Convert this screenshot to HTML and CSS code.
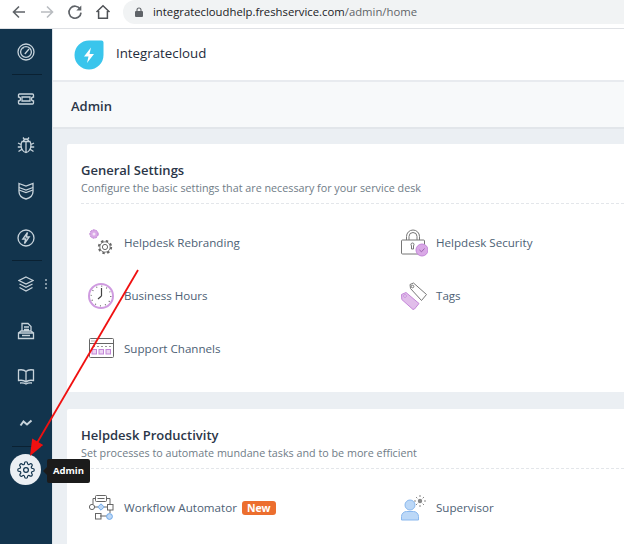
FILE: index.html
```html
<!DOCTYPE html>
<html lang="en">
<head>
<meta charset="utf-8">
<title>Admin</title>
<link rel="stylesheet" href="styles.css">
</head>
<body>
<div class="window">
  <header class="browser">
    <svg class="nav-icon" width="16" height="16" viewBox="0 0 16 16"><path d="M14 8H2.500M8 2.500 2.500 8 8 13.500" fill="none" stroke="#5f6368" stroke-width="1.600"/></svg>
    <svg class="nav-icon" width="16" height="16" viewBox="0 0 16 16"><path d="M2 8h11.500M8 2.500 13.500 8 8 13.500" fill="none" stroke="#b9bcc0" stroke-width="1.600"/></svg>
    <svg class="nav-icon" width="16" height="16" viewBox="0 0 16 16"><path d="M13.200 5.200A6 6 0 1 0 14 8.600" fill="none" stroke="#5f6368" stroke-width="1.700"/><path d="M14.300 1.500v5h-5z" fill="#5f6368"/></svg>
    <svg class="nav-icon" width="16" height="16" viewBox="0 0 16 16"><path d="M1.500 8 8 1.800 14.500 8M3.600 7v7.200h8.800V7" fill="none" stroke="#4f5256" stroke-width="1.500"/></svg>
    <div class="address">
      <svg width="8" height="10" viewBox="0 0 8 10"><path d="M2 4V3a2 2 0 0 1 4 0v1" fill="none" stroke="#5f6368" stroke-width="1.100"/><rect y="4" width="8" height="6" rx="1" fill="#5f6368"/></svg>
      <span class="url">integratecloudhelp.freshservice.com<span class="url-path">/admin/home</span></span>
    </div>
  </header>

  <div class="app">
    <nav class="rail">
      <div class="rail-item rail-sep"><svg width="18" height="18" viewBox="0 0 18 18" class="rail-icon"><circle cx="9" cy="9" r="8"/><circle cx="9" cy="9" r="5.400"/><path d="M7.800 11 12 6M6 4.500l.5.800"/></svg></div>
      <div class="rail-item"><svg width="18" height="12" viewBox="0 0 18 12" class="rail-icon"><path d="M2.500 1h13a1 1 0 0 1 1 1v2a2 2 0 0 0 0 4v2a1 1 0 0 1-1 1h-13a1 1 0 0 1-1-1V8a2 2 0 0 0 0-4V2a1 1 0 0 1 1-1z"/><path d="M5 4h8v4H5z"/></svg></div>
      <div class="rail-item"><svg width="18" height="18" viewBox="0 0 18 18" class="rail-icon"><path d="M5 5.500h8c1.200 2 1.400 6-.4 8.500-1 1.500-2.400 2.500-3.600 2.500S6.400 15.500 5.400 14C3.600 11.500 3.800 7.500 5 5.500zM6.500 5.500c0-1.500 1-2.500 2.500-2.500s2.500 1 2.500 2.500M6 1.500l1.500 2M12 1.500l-1.500 2M9 6v10M1 7l3 1.500M17 7l-3 1.500M.8 11H3.700M17.200 11h-2.900M1.500 15.500l3-2M16.500 15.500l-3-2"/></svg></div>
      <div class="rail-item"><svg width="16" height="18" viewBox="0 0 16 18" class="rail-icon"><path d="M1 1.500 8 4l7-2.500v8c0 3.500-3 6.500-7 7.500-4-1-7-4-7-7.500z"/><path d="M1 5.500 8 8l7-2.500M1 8l7 2.500L15 8"/></svg></div>
      <div class="rail-item rail-sep"><svg width="18" height="18" viewBox="0 0 18 18" class="rail-icon"><circle cx="9" cy="9" r="8"/><path d="M10.500 3.500 5.800 10h2.900l-1.200 4.500L12.200 8H9.300z"/></svg></div>
      <div class="rail-item"><svg width="16" height="17" viewBox="0 0 16 17" class="rail-icon"><path d="M8 1 15 4.500 8 8 1 4.500zM1.500 8 8 11.300 14.500 8M1.500 11.500 8 15l6.500-3.500"/></svg><span class="rail-dots"></span></div>
      <div class="rail-item"><svg width="18" height="18" viewBox="0 0 18 18" class="rail-icon"><path d="M5 9V1.500h6l3 3V9M7 5h5M7 7.500h5M1.500 11h15v5.500h-15zM1.500 11 4 9h10l2.500 2M5 13.500h8"/></svg></div>
      <div class="rail-item"><svg width="18" height="17" viewBox="0 0 18 17" class="rail-icon"><path d="M9 3.500C7.500 2 4.500 1.500 1.500 2v10.500c3-.5 6 0 7.500 1.500 1.500-1.500 4.500-2 7.500-1.500V2C13.500 1.500 10.500 2 9 3.500zM9 3.500V14M3 15c2.500-.3 4.500 0 6 1 1.500-1 3.500-1.300 6-1"/></svg></div>
      <div class="rail-item rail-sep"><svg width="14" height="8" viewBox="0 0 14 8" class="rail-trend"><path d="M1.500 6.500 4.500 2.500 8 5.500 12.500 1.500"/></svg></div>
      <div class="rail-item">
        <span class="rail-active"><svg width="18" height="18" viewBox="0 0 24 24" fill="none" stroke="#12344d" stroke-width="1.600" stroke-linejoin="round"><circle cx="12" cy="12" r="3.200"/><path d="M19.400 15a1.650 1.650 0 0 0 .33 1.820l.06.06a2 2 0 1 1-2.830 2.830l-.06-.06a1.650 1.650 0 0 0-2.800 1.170V21a2 2 0 0 1-4 0v-.09a1.650 1.650 0 0 0-2.820-1.150l-.06.06a2 2 0 1 1-2.830-2.830l.06-.06A1.650 1.650 0 0 0 3.090 14H3a2 2 0 0 1 0-4h.09a1.650 1.650 0 0 0 1.150-2.820l-.06-.06a2 2 0 1 1 2.830-2.830l.06.06A1.650 1.650 0 0 0 10 3.090V3a2 2 0 0 1 4 0v.09a1.650 1.650 0 0 0 2.820 1.150l.06-.06a2 2 0 1 1 2.830 2.830l-.06.06A1.650 1.650 0 0 0 20.910 10H21a2 2 0 0 1 0 4h-.09a1.650 1.650 0 0 0-1.510 1z"/></svg></span>
      </div>
    </nav>

    <main class="main">
      <div class="brand">
        <svg width="30" height="30" viewBox="0 0 30 30"><path d="M15 .5h12.500a2 2 0 0 1 2 2V15A14.500 14.500 0 1 1 15 .5z" fill="#3ac5ec"/><path d="M17 7.500 10 16.500h4.500L13 23l7-9h-4.500z" fill="#fff"/></svg>
        <span class="brand-name">Integratecloud</span>
      </div>
      <div class="page-title">Admin</div>

      <section class="card">
        <div class="card-head">
          <h2>General Settings</h2>
          <p>Configure the basic settings that are necessary for your service desk</p>
        </div>
        <div class="items">
          <div class="item">
            <svg width="28" height="28" viewBox="0 0 28 28"><circle cx="6" cy="5" r="4.200" fill="#d9a8e6" stroke="#bd7fd3" stroke-dasharray="2 1"/><circle cx="6" cy="5" r="1.500" fill="#f3e3f7"/><circle cx="17" cy="18" r="2.600" fill="none" stroke="#666"/><circle cx="17" cy="18" r="6.200" fill="none" stroke="#666" stroke-width="1.900" stroke-dasharray="2.400 2.480"/><circle cx="17" cy="18" r="5.200" fill="none" stroke="#666" stroke-width=".8"/></svg>
            <span>Helpdesk Rebranding</span>
          </div>
          <div class="item">
            <svg width="28" height="28" viewBox="0 0 28 28"><path d="M6.500 11V7.500a6.500 6.500 0 0 1 13 0V11M9 11V7.500a4 4 0 0 1 8 0V11" fill="none" stroke="#777"/><rect x="1.500" y="11" width="23" height="14" rx="1" fill="#fff" stroke="#777"/><path d="M11 15.500a1.500 1.500 0 1 1 3 0l-.5 1.500v3h-2v-3z" fill="none" stroke="#777"/><circle cx="22" cy="21" r="6" fill="#d9a8e6" stroke="#c487d9"/><path d="m19.500 21 2 1.800 3-3.300" fill="none" stroke="#9b62ad"/></svg>
            <span>Helpdesk Security</span>
          </div>
          <div class="item">
            <svg width="28" height="28" viewBox="0 0 28 28"><circle cx="13" cy="14" r="12" fill="#fff" stroke="#cf9be0" stroke-width="2"/><circle cx="13" cy="14" r="9.800" fill="none" stroke="#666" stroke-width="1.200" stroke-dasharray="1 4.130"/><path d="M13.500 14V6M13.500 14l-3.500 3" fill="none" stroke="#444" stroke-width="1.200"/></svg>
            <span>Business Hours</span>
          </div>
          <div class="item">
            <svg width="28" height="28" viewBox="0 0 28 28"><path d="m10 2.500 3.500-1.500 13 11.500-5 6-11-12z" fill="#fff" stroke="#777"/><circle cx="12.500" cy="4.500" r="1.300" fill="#fff" stroke="#777"/><path d="M1.500 12.500 6 10.500l13 11-4.500 5.500-1.500.5L1.800 17.500z" fill="#e1bdea" stroke="#c487d9"/><circle cx="5" cy="14" r="1.300" fill="#fff" stroke="#c487d9"/></svg>
            <span>Tags</span>
          </div>
          <div class="item">
            <svg width="28" height="28" viewBox="0 0 28 28"><rect x="1.500" y="3.500" width="24" height="19" rx="1" fill="#fff" stroke="#666"/><path d="M1.500 8.500h24" stroke="#666"/><path d="M3.500 6h6" stroke="#666" stroke-dasharray="1 1"/><path d="M5 11.500h18" stroke="#999" stroke-dasharray="2 2"/><g fill="#ecd5f2" stroke="#c487d9"><rect x="4" y="14.500" width="4.500" height="4.500"/><rect x="11" y="14.500" width="4.500" height="4.500"/><rect x="18" y="14.500" width="4.500" height="4.500"/></g></svg>
            <span>Support Channels</span>
          </div>
        </div>
      </section>

      <section class="card">
        <div class="card-head">
          <h2>Helpdesk Productivity</h2>
          <p>Set processes to automate mundane tasks and to be more efficient</p>
        </div>
        <div class="items">
          <div class="item">
            <svg width="28" height="28" viewBox="0 0 28 28"><g fill="none" stroke="#666"><rect x="7.500" y="1.500" width="11" height="6" rx="1"/><path d="M9.500 4.500h7M7.500 4.500H5V10M18.500 4.500H22v6M6 13h4M16 13h4M22 16v3M12 22h7"/><circle cx="4" cy="13" r="2.600"/><rect x="19.500" y="10.500" width="5.500" height="5.500"/><rect x="7.500" y="19.500" width="5.500" height="5.500"/></g><path d="m13 9.800 3.200 3.200-3.200 3.200L9.800 13z" fill="#bcd8f7" stroke="#6fa8e8"/><circle cx="21.500" cy="22.500" r="2.900" fill="#bcd8f7" stroke="#6fa8e8"/></svg>
            <span>Workflow Automator</span>
            <b class="badge">New</b>
          </div>
          <div class="item">
            <svg width="28" height="28" viewBox="0 0 28 28"><circle cx="10" cy="11" r="5" fill="#bcd8f7" stroke="#8ab8ee"/><path d="M1.500 26v-3.500c0-3 2.500-5 5-5h7c2.500 0 5 2 5 5V26z" fill="#bcd8f7" stroke="#8ab8ee"/><circle cx="20" cy="7" r="2.200" fill="#888"/><path d="M20 1v2M20 11v2M14 7h2M24 7h2M16 3l1.300 1.300M24 3l-1.300 1.300M16 11l1.300-1.300M24 11l-1.300-1.300" stroke="#888"/></svg>
            <span>Supervisor</span>
          </div>
        </div>
      </section>
    </main>
  </div>

  <div class="tooltip">Admin</div>
  <svg class="arrow" width="624" height="544" viewBox="0 0 624 544"><path d="M138 270 37 443" fill="none" stroke="#f01010" stroke-width="1.800"/><path d="m30 456 2.200-17.500 11 6.500z" fill="#f01010"/></svg>
</div>
</body>
</html>
```
FILE: styles.css
```css
* { box-sizing: border-box; }
html, body { margin: 0; padding: 0; }
body { font-family: "Open Sans", "Liberation Sans", sans-serif; background: #fff; }
.window { position: relative; width: 624px; height: 544px; overflow: hidden; }

.browser { display: flex; align-items: flex-start; height: 29px; padding-top: 4px; padding-left: 11px; gap: 12px; background: #fff; border-bottom: 1px solid #dfe1e5; }
.nav-icon { flex: none; }
.address { display: flex; align-items: center; gap: 10px; flex: 1; height: 24px; margin-top: -4px; padding-left: 12px; background: #f1f3f4; border-radius: 12px 0 0 12px; }
.url { font-size: 11.300px; color: #202124; line-height: 24px; white-space: nowrap; }
.url-path { color: #5f6368; }

.app { display: flex; height: 515px; }
.rail { flex: none; width: 53px; background: #12344d; border-right: 1px solid #dfe5ea; display: flex; flex-direction: column; }
.rail-item { position: relative; flex: none; height: 46.400px; display: flex; align-items: center; justify-content: center; }
.rail-sep::after { content: ""; position: absolute; left: 12px; right: 10px; bottom: 0; height: 1px; background: #0a2132; }
.rail-icon { fill: none; stroke: #c7d3db; stroke-width: 1.300; }
.rail-trend { fill: none; stroke: #c7d3db; stroke-width: 2; }
.rail-dots { position: absolute; left: 45px; top: 18px; width: 2px; height: 2px; border-radius: 50%; background: #a8b7c2; box-shadow: 0 4px 0 #a8b7c2, 0 8px 0 #a8b7c2; }
.rail-active { display: flex; align-items: center; justify-content: center; width: 31px; height: 31px; border-radius: 50%; background: #ebeff3; margin-right: 1px; }

.main { flex: 1; min-width: 0; background: #ebeff3; }
.brand { display: flex; align-items: center; gap: 12px; height: 53px; padding-left: 21px; background: #fff; border-bottom: 2px solid #e8ebef; }
.brand-name { font-size: 13.300px; color: #1f2d3d; padding-bottom: 3px; }
.page-title { height: 47px; display: flex; align-items: center; padding: 2px 0 0 18px; font-size: 13px; font-weight: 600; color: #2b3648; background: #f7f9fa; border-bottom: 2px solid #e2e6ea; }

.card { margin: 15px 0 17px 14px; background: #fff; border-radius: 2px 0 0 0; padding: 0 0 0 14px; height: 248px; }
.card-head { padding-top: 17px; height: 60px; border-bottom: 1px dashed #e3e6ea; }
.card h2 { margin: 0; font-size: 13px; line-height: 19px; font-weight: 600; color: #2b3648; }
.card p { margin: 0; font-size: 10.750px; line-height: 17px; color: #6f7c87; white-space: nowrap; }
.items { display: grid; grid-template-columns: 312px 1fr; grid-auto-rows: 53px; padding: 12px 0 0 7px; }
.item { display: flex; align-items: center; gap: 8px; font-size: 11.600px; color: #4d6175; white-space: nowrap; }
.item svg { flex: none; }
.badge { margin-left: -3px; padding: 0 5px; height: 14px; line-height: 14px; border-radius: 3px; font-size: 10.500px; font-weight: 700; color: #fff; background: #ec6e2e; }

.tooltip { position: absolute; left: 47px; top: 459px; width: 43px; height: 24px; background: #1b1b1b; border-radius: 2px; color: #fff; font-size: 9.500px; font-weight: 700; line-height: 23px; text-align: center; }
.tooltip::before { content: ""; position: absolute; left: -4px; top: 8px; border: 4px solid transparent; border-left: 0; border-right-color: #1b1b1b; }
.arrow { position: absolute; left: 0; top: 0; pointer-events: none; }
```
